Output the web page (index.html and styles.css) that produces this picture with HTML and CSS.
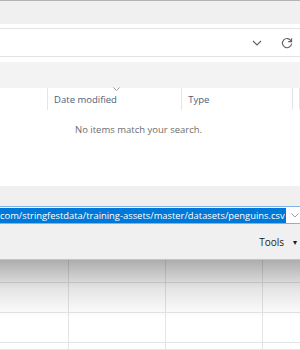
FILE: index.html
```html
<!DOCTYPE html>
<html lang="en">
<head>
    <meta charset="UTF-8">
    <meta name="viewport" content="width=device-width, initial-scale=1.0">
    <title>Open</title>
    <link rel="stylesheet" href="styles.css">
</head>
<body>
    <div class="dialog">
        <div class="titlebar"></div>
        <div class="nav">
            <div class="address">
                <span class="addr-chevron">
                    <svg width="10" height="6" viewBox="0 0 10 6"><path d="M1 1l4 4 4-4" fill="none" stroke="#606060" stroke-width="1.1"/></svg>
                </span>
                <span class="addr-refresh">
                    <svg width="12" height="12" viewBox="0 0 12 12"><path d="M10.2 4.2A4.6 4.6 0 1 0 10.6 6.5" fill="none" stroke="#606060" stroke-width="1.1"/><path d="M10.6 1.2v3.4H7.2" fill="none" stroke="#606060" stroke-width="1.1"/></svg>
                </span>
            </div>
        </div>
        <div class="toolbar"></div>
        <div class="columns">
            <div class="col col-name"></div>
            <div class="col col-date">
                <span class="sort">
                    <svg width="7" height="4" viewBox="0 0 7 4"><path d="M0.5 0.5l3 3 3-3" fill="none" stroke="#8a8a8a" stroke-width="0.9"/></svg>
                </span>
                Date modified
            </div>
            <div class="col col-type">Type</div>
            <div class="col col-size"></div>
        </div>
        <div class="empty">No items match your search.</div>
        <div class="footer">
            <div class="filename">
                <span class="filename-text"><span class="selected">com/stringfestdata/training-assets/master/datasets/penguins.csv</span></span>
                <span class="filename-arrow">
                    <svg width="8" height="5" viewBox="0 0 8 5"><path d="M0.5 0.5l3.5 3.5 3.5-3.5" fill="none" stroke="#a0a0a0" stroke-width="1"/></svg>
                </span>
            </div>
            <div class="footer-tools">
                <span class="tools">Tools</span>
                <span class="tools-arrow">&#9662;</span>
            </div>
        </div>
    </div>
    <div class="sheet">
        <div class="cell"></div><div class="cell"></div><div class="cell"></div><div class="cell"></div>
        <div class="cell"></div><div class="cell"></div><div class="cell"></div><div class="cell"></div>
        <div class="cell"></div><div class="cell"></div><div class="cell"></div><div class="cell"></div>
        <div class="cell"></div><div class="cell"></div><div class="cell"></div><div class="cell"></div>
    </div>
</body>
</html>
```

FILE: styles.css
```css
* {
    margin: 0;
    padding: 0;
    box-sizing: border-box;
}
body {
    width: 300px;
    height: 350px;
    overflow: hidden;
    background: #ffffff;
    font-family: "Open Sans", "Noto Sans", sans-serif;
    font-size: 9.5px;
}
.dialog {
    background: #ffffff;
    height: 260px;
    display: flex;
    flex-direction: column;
    border-bottom: 1px solid #c4c4c4;
}
.titlebar {
    height: 24px;
    background: #f0f0f0;
    border-top: 1px solid #b4b4b4;
}
.nav {
    padding: 4px 0 5px;
}
.address {
    height: 29px;
    border-top: 1px solid #e3e3e3;
    border-bottom: 1px solid #e3e3e3;
    display: flex;
    align-items: center;
    justify-content: flex-end;
}
.addr-chevron {
    display: flex;
    margin-right: 19px;
}
.addr-refresh {
    display: flex;
    margin-right: 7px;
}
.toolbar {
    height: 26px;
    background: #f3f3f3;
}
.columns {
    height: 22px;
    display: flex;
}
.col {
    border-right: 1px solid #e5e5e5;
    color: #4c607a;
    padding: 6px 0 0 6px;
    position: relative;
    line-height: 12px;
}
.col-name {
    width: 49px;
}
.col-date {
    width: 137px;
}
.col-type {
    width: 113px;
}
.col-size {
    flex: 1;
}
.sort {
    position: absolute;
    top: -1px;
    left: 65px;
    display: flex;
}
.empty {
    color: #6d6d6d;
    padding-left: 75px;
    margin-top: 14px;
    height: 62px;
    line-height: 12px;
}
.footer {
    flex: 1;
    background: #f0f0f0;
    padding-top: 20px;
}
.filename {
    height: 18px;
    margin-right: -1px;
    border: 1px solid #7eb4ea;
    border-left: none;
    background: #ffffff;
    display: flex;
    align-items: center;
}
.filename-text {
    flex: 1;
    overflow: hidden;
    white-space: nowrap;
    display: flex;
}
.selected {
    background: #0078d7;
    color: #ffffff;
    font-size: 9.4px;
    line-height: 15px;
    height: 15px;
    padding-right: 1px;
}
.filename-arrow {
    display: flex;
    width: 12px;
    justify-content: flex-start;
    padding-left: 3px;
}
.footer-tools {
    display: flex;
    justify-content: flex-end;
    align-items: center;
    margin-top: 12px;
    padding-right: 3px;
    line-height: 12px;
}
.tools {
    color: #1a1a1a;
    font-size: 10px;
}
.tools-arrow {
    font-size: 8px;
    margin-left: 9px;
    color: #1a1a1a;
}
.sheet {
    position: relative;
    display: grid;
    grid-template-columns: 69px 97px 97px 1fr;
    grid-template-rows: 23px 30px 30px 1fr;
    height: 90px;
}
.sheet::after {
    content: "";
    position: absolute;
    left: 0;
    right: 0;
    top: 0;
    height: 58px;
    background: linear-gradient(rgba(0, 0, 0, 0.32), rgba(0, 0, 0, 0.1) 50%, rgba(0, 0, 0, 0));
}
.cell {
    border-right: 1px solid #e4e4e4;
    border-bottom: 1px solid #e4e4e4;
}
.cell:nth-child(4n) {
    border-right: none;
}
```
